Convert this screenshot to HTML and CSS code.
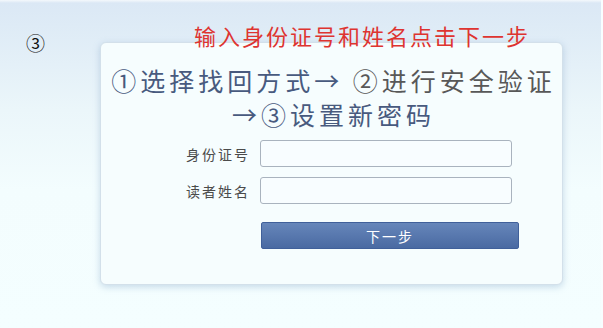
FILE: index.html
```html
<!DOCTYPE html>
<html lang="zh-CN">

<head>
    <meta charset="UTF-8">
    <title>找回密码</title>
    <link rel="stylesheet" href="styles.css">
</head>

<body>
    <div class="page">
        <div class="mark">③</div>
        <div class="main">
            <div class="hint">输入身份证号和姓名点击下一步</div>
            <div class="card">
                <h1 class="steps">
                    <span class="step-on">①选择找回方式→</span> <span class="step-off">②进行安全验证</span><br>
                    <span class="step-on">→③设置新密码</span>
                </h1>
                <form class="form">
                    <label class="label" for="idcard">身份证号</label>
                    <input class="field" id="idcard" type="text">
                    <label class="label" for="reader">读者姓名</label>
                    <input class="field" id="reader" type="text">
                    <button class="btn" type="button">下一步</button>
                </form>
            </div>
        </div>
    </div>
</body>

</html>
```

FILE: styles.css
```css
* {
    margin: 0;
    padding: 0;
    box-sizing: border-box;
}
html,
body {
    height: 100%;
}
body {
    font-family: "Noto Sans CJK SC", "Liberation Sans", sans-serif;
    background: linear-gradient(to bottom, #f4f8fc 0, #dbe8f5 3px, #deebf6 25px, #ebf6fa 110px, #f3fdfe 190px, #f4feff 100%);
    overflow: hidden;
}
.page {
    display: grid;
    grid-template-columns: 100px 463px;
    padding-top: 23px;
    height: 100%;
    border-right: 2px solid #f8feff;
}
.mark {
    padding-left: 26px;
    margin-top: 10px;
    font-size: 19px;
    line-height: 20px;
    color: #111;
}
/* the hint sits a little over the top edge of the card */
.hint {
    position: relative;
    z-index: 1;
    padding-left: 94px;
    font-size: 22px;
    line-height: 24px;
    letter-spacing: 2px;
    color: #de3430;
    margin-bottom: -5px;
}
.card {
    background: #f6fdfe;
    border: 1px solid #d3e0ea;
    border-radius: 6px;
    box-shadow: 0 2px 7px rgba(110, 150, 190, 0.35);
    padding: 20px 0 35px;
}
.steps {
    font-size: 25px;
    font-weight: normal;
    line-height: 34px;
    letter-spacing: 4px;
    text-align: center;
    margin-right: -4px;
}
.step-on {
    color: #485a7e;
}
.step-off {
    color: #585858;
}
.form {
    display: grid;
    grid-template-columns: 149px 252px;
    column-gap: 10px;
    row-gap: 10px;
    margin-top: 9px;
    align-items: center;
}
.label {
    justify-self: end;
    font-size: 14px;
    letter-spacing: 2px;
    color: #4b4b4b;
}
.field {
    height: 27px;
    border: 1px solid #a9b3be;
    border-radius: 3px;
    background: #f8fdff;
}
.btn {
    grid-column: 2;
    width: 258px;
    height: 27px;
    margin: 8px 0 0 1px;
    border: 1px solid #40609a;
    border-radius: 2px;
    background: linear-gradient(to bottom, #6686ba, #4a6aa2);
    color: #fff;
    font-family: inherit;
    font-size: 14px;
    letter-spacing: 2px;
}
```
